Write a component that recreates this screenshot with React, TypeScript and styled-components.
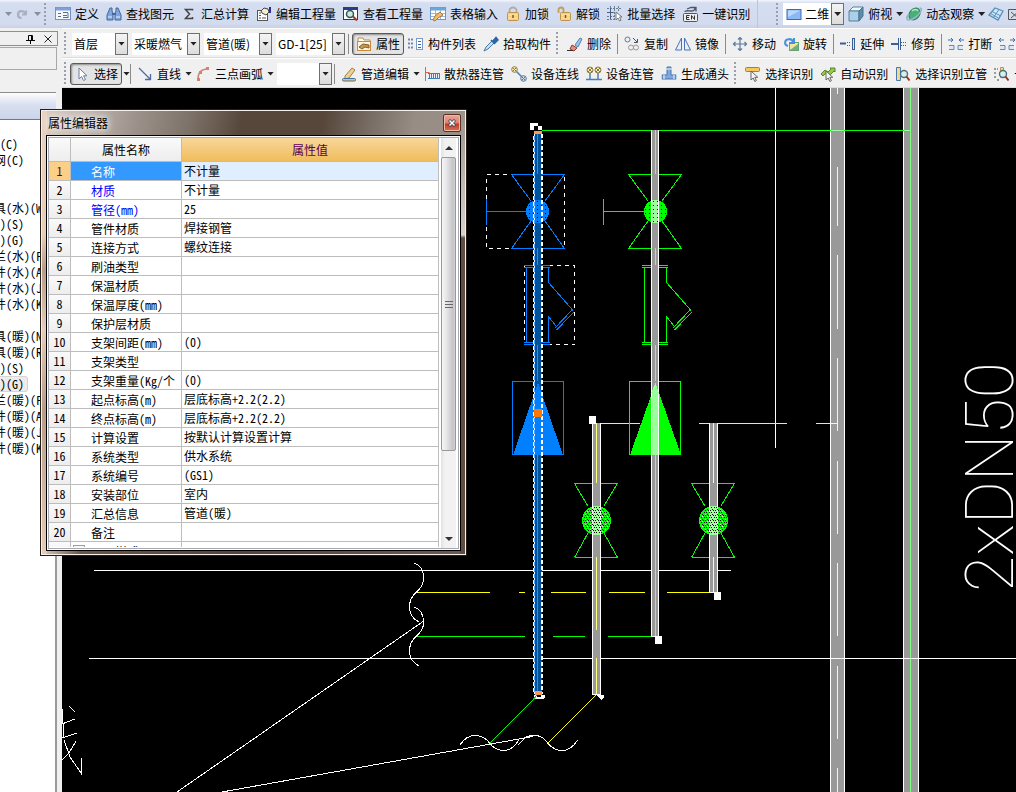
import React from "react";
import styled, { createGlobalStyle, css } from "styled-components";

const Global = createGlobalStyle`
  *, *::before, *::after { box-sizing: border-box; }
  body {
    margin: 0;
    background: #f0f0f0;
    color: #000;
    font-family: "Noto Sans CJK SC", "Liberation Sans", sans-serif;
    font-size: 12px;
    line-height: 16px;
  }
  button, select { font: inherit; color: inherit; }
`;

/* ---------- page frame ---------- */

const Page = styled.div`
  position: relative;
  display: flex;
  flex-direction: column;
  height: 100vh;
  overflow: hidden;
`;

const Work = styled.div`
  display: flex;
  flex: 1;
  min-height: 0;
`;

const Main = styled.main`
  display: flex;
  flex: 1;
  flex-direction: column;
  min-width: 0;
`;

/* ---------- toolbars ---------- */

const TopBar = styled.header`
  display: flex;
  align-items: center;
  height: 28px;
  overflow: hidden;
  white-space: nowrap;
  background: linear-gradient(#f4f7fd, #d5ddf0 3px, #d3dbee 24px, #c9d1e4);
`;

const BarRow = styled.div`
  display: flex;
  align-items: center;
  flex: none;
  height: 30px;
  padding: 2px 0 0 2px;
  overflow: hidden;
  white-space: nowrap;
  background: #f0f0f0;
  border-bottom: 1px solid #dcdcdc;
  box-shadow: inset 0 1px #fff;
`;

const Group = styled.div<{ $left?: number; $end?: number; $gap?: number }>`
  display: flex;
  flex: none;
  align-items: center;
  height: 100%;
  gap: ${(p) => p.$gap ?? 7}px;
  padding-left: ${(p) => p.$left ?? 0}px;
  padding-right: ${(p) => p.$end ?? 0}px;
`;

const Grip = styled.span`
  flex: none;
  width: 3px;
  height: 23px;
  background: radial-gradient(circle at 1px 1px, #9a9fab 1px, transparent 1px) 0 0 / 3px 4px;
`;

const Separator = styled.span`
  flex: none;
  width: 1px;
  height: 20px;
  margin: 0 -1px;
  background: #8a8a8a;
`;

const Tool = styled.button<{ $pressed?: boolean }>`
  display: flex;
  flex: none;
  align-items: center;
  gap: 4px;
  padding: 0;
  border: 0;
  background: none;
  white-space: nowrap;
  ${(p) =>
    p.$pressed &&
    css`
      height: 22px;
      padding: 0 3px;
      border: 1px solid #5a5a5a;
      border-radius: 3px;
      background: #e4e4e4;
      box-shadow: inset 1px 1px 2px #8c8c8c;
    `}
`;

const Caret = styled.span<{ $faded?: boolean }>`
  width: 7px;
  height: 4px;
  background: ${(p) => (p.$faded ? "#8a8f9c" : "#222")};
  clip-path: polygon(0 0, 100% 0, 50% 100%);
`;

const Combo = styled.span<{ $width: number }>`
  display: grid;
  flex: none;
  grid-template-columns: 1fr 13px;
  width: ${(p) => p.$width}px;
  height: 22px;
  background: #fff;
`;

const ComboSelect = styled.select`
  grid-area: 1 / 1 / 2 / 3;
  min-width: 0;
  padding: 0 13px 0 2px;
  border: 0;
  border-radius: 0;
  background: #fff;
  appearance: none;
`;

const ComboArrow = styled.span`
  display: flex;
  grid-area: 1 / 2 / 2 / 3;
  align-items: center;
  justify-content: center;
  z-index: 1;
  border: 1px solid #707070;
  background: linear-gradient(#f4f4f4, #dcdcdc);
  pointer-events: none;
`;

const ViewCombo = styled.span`
  display: flex;
  align-items: center;
  gap: 1px;
  height: 22px;
  padding-left: 3px;
  background: #fff;
`;

const BarEnd = styled.span`
  width: 17px;
  height: 100%;
  border-left: 1px solid #bcc5dc;
  border-radius: 0 4px 4px 0;
`;

/* ---------- left panel ---------- */

const Side = styled.aside`
  display: flex;
  flex: none;
  flex-direction: column;
  width: 62px;
  padding: 3px 4px 0 0;
  overflow: hidden;
`;

const SideHead = styled.div`
  display: flex;
  flex: none;
  align-items: center;
  justify-content: flex-end;
  gap: 9px;
  height: 15px;
  padding-right: 5px;
  border: 1px solid #8e8e8e;
  border-left: 0;
`;

const IconButton = styled.button`
  display: flex;
  padding: 0;
  border: 0;
  background: none;
`;

const SideBox = styled.div`
  flex: none;
  height: 23px;
  margin: 1px 1px 0 0;
  border: 1px solid #a8a8a8;
  border-left: 0;
`;

const SideBand = styled.div`
  flex: none;
  height: 28px;
  margin: 22px 2px 0 0;
  border-top: 1px solid #8e8e8e;
  border-bottom: 1px solid #777;
  background: linear-gradient(#fdfdff, #d8dff0 12px, #ccd4ea);
`;

const Tree = styled.ul`
  flex: 1;
  margin: 0 1px 0 0;
  padding: 16px 0 0;
  overflow: hidden;
  list-style: none;
  white-space: nowrap;
  background: #fff;
  border-right: 2px solid #9a9a9a;
  font-feature-settings: "hwid";
`;

const TreeItem = styled.li<{ $active?: boolean }>`
  display: flex;
  height: 16px;
  align-items: center;
  ${(p) =>
    p.$active &&
    css`
      width: 28px;
      background: #ececec;
      border: 1px solid #d6d6d6;
      border-left: 0;
      border-radius: 0 3px 3px 0;
    `}
`;

const TreeText = styled.span`
  margin-left: -6px;
  white-space: pre;
`;

/* ---------- drawing area ---------- */

const Canvas = styled.section`
  flex: 1;
  min-height: 0;
  overflow: hidden;
  background: #000;
  svg { display: block; width: 100%; height: 100%; }
`;

const PipeLabel = styled.text`
  fill: #fff;
  font-family: Roboto, "Liberation Sans", sans-serif;
  font-size: 66px;
  font-weight: 100;
`;

/* ---------- property window ---------- */

const Dialog = styled.section`
  position: absolute;
  left: 40px;
  top: 109px;
  width: 427px;
  padding: 0 4px 4px;
  border: 1px solid #241c18;
  box-shadow: inset 0 0 0 1px #f6f0ec;
  background:
    linear-gradient(#9a9189, #d8d2cc 125px, #5e4e42 128px, #5e4e42) right / 6px 100% no-repeat,
    linear-gradient(#e6d3c3, #e6cdb8 125px, #b79c88 160px, #e6cdb8 220px, #b79c88 300px, #e6cdb8) left / 6px 100% no-repeat,
    linear-gradient(90deg, #e0c9b6, #6b5547 40px, #54443a 200px, #6b5b50) bottom / 100% 6px no-repeat,
    linear-gradient(100deg, #dccdc2, #c4bab3 40px, #9c928b 95px, #7c7167 150px, #57473b 200px, #57473b 280px, #7b7067 330px, #978d85 370px, #9a9189);
`;

const TitleBar = styled.header`
  display: flex;
  align-items: center;
  justify-content: space-between;
  height: 27px;
  padding: 0 1px 1px 3px;
`;

const Title = styled.h1`
  margin: 0;
  font-size: 12px;
  font-weight: 400;
  text-shadow: 0 0 6px #fff, 0 0 10px #fff;
`;

const CloseButton = styled.button`
  display: flex;
  align-items: center;
  justify-content: center;
  width: 18px;
  height: 18px;
  padding: 0;
  border: 1px solid #5c3228;
  border-radius: 2px;
  background: linear-gradient(#eba595, #dd8070 8px, #bd3a20 9px, #dd7050);
  box-shadow: inset 0 0 0 1px #f0b8aa;
`;

const DialogBody = styled.div`
  display: flex;
  height: 412px;
  margin: 0 3px 2px;
  border: 1px solid #a8a8b0;
  background: #fff;
  box-shadow: 0 0 0 1px #fff, 0 0 0 2px #000;
`;

const TableClip = styled.div`
  flex: 1;
  overflow: hidden;
  border-bottom: 1px solid #fff;
`;

const PropTable = styled.table`
  width: 100%;
  table-layout: fixed;
  border-spacing: 0;
  font-feature-settings: "hwid";
  line-height: 18px;
`;

const HeadCell = styled.th<{ $hot?: boolean }>`
  height: 24px;
  padding: 0;
  border-right: 1px solid #bdbdbd;
  border-bottom: 1px solid #bdbdbd;
  font-weight: 400;
  color: ${(p) => (p.$hot ? "#5a005a" : "#000")};
  background: ${(p) => (p.$hot ? "linear-gradient(#f8d69a, #f0bd5c)" : "linear-gradient(#fafafa, #ededed)")};
`;

const cell = css`
  height: 19px;
  overflow: hidden;
  padding: 0;
  border-right: 1px solid #bdbdbd;
  border-bottom: 1px solid #bdbdbd;
  font-weight: 400;
  text-align: left;
  white-space: nowrap;
`;

const NumCell = styled.th<{ $on?: boolean }>`
  ${cell}
  text-align: center;
  color: ${(p) => (p.$on ? "#5a005a" : "#000")};
  background: ${(p) => (p.$on ? "#fbcf85" : "linear-gradient(#fafafa, #ededed)")};
`;

const NameCell = styled.td<{ $on?: boolean; $blue?: boolean; $tree?: boolean }>`
  ${cell}
  padding-top: 2px;
  padding-left: ${(p) => (p.$tree ? 2 : 20)}px;
  line-height: 16px;
  color: ${(p) => (p.$on ? "#fff" : p.$blue ? "#0000ff" : "#000")};
  background: ${(p) => (p.$on ? "#3399ff" : "#fff")};
`;

const ValueCell = styled.td<{ $on?: boolean }>`
  ${cell}
  padding-left: 2px;
  background: ${(p) => (p.$on ? "#e0efff" : "#fff")};
`;

const TreeRow = styled.span`
  display: flex;
  gap: 6px;
`;

const Expander = styled.button`
  width: 12px;
  height: 12px;
  margin-top: 1px;
  padding: 0;
  border: 1px solid #a0a0a0;
  background: #f4f4f4;
  line-height: 8px;
`;

const ScrollBar = styled.div`
  display: flex;
  flex-direction: column;
  width: 15px;
  margin: 0 2px;
  background: linear-gradient(90deg, #e2e2e2, #f2f2f2 4px, #f2f2f2);
`;

const ScrollButton = styled.button`
  display: flex;
  align-items: center;
  justify-content: center;
  height: 19px;
  padding: 0;
  border: 0;
  background: none;
`;

const ScrollTrack = styled.div`
  flex: 1;
`;

const Thumb = styled.div`
  display: flex;
  align-items: center;
  justify-content: center;
  height: 79%;
  border: 1px solid #989898;
  border-radius: 2px;
  background: linear-gradient(90deg, #f6f6f6, #e4e4e6 5px, #c4c4c8 11px, #d4d4d8);
`;

/* ---------- icons ---------- */

const B = "#3a5f94";
const P = { fill: "none", strokeWidth: 1 } as const;

const lens = (
  <>
    <circle cx="9" cy="8" r="3.5" fill="#d8f0e8" stroke="#4a7080" strokeWidth="1.4" />
    <path d="M11.5 10.5l3 4" stroke="#a03020" strokeWidth="2" />
  </>
);
const cursor = <path d="M6 5v9l2.2-2 1.6 3.5 1.6-.8-1.6-3.4h3z" fill="#f6f6f6" stroke="#666" />;

const ICONS: Record<string, React.ReactNode> = {
  redo: <path d="M12 9V4.500M12.500 8.500H8M12 8C10 4 4 4 4 8.500c0 2 1.500 3.500 3.500 3.500" {...P} stroke="#a9b0c0" strokeWidth="2.2" />,
  define: (<><rect x=".5" y="1.500" width="15" height="12" fill="#f4f8ff" stroke="#6f92c8" /><path d="M1 3h14" stroke="#7ea0d4" strokeWidth="3" /><path d="M3 7.500h3M3 10.500h3M8 6.500h5M8 11.500h5M13 7v5M8 9.500h4" stroke="#5c7080" /></>),
  find: (<><path d="M4 2h2v3l1 2v7H1V9zM12 2h-2v3l-1 2v7h6V9z" fill="#7fa6dc" stroke="#44689c" /><path d="M6 8h4" stroke="#44689c" strokeWidth="2" /><path d="M2 11h4M10 11h4" stroke="#e8f2ff" /></>),
  sum: <path d="M11.500 4.500V3.500H4.500l4 4.500-4 4.500h7v-1.500" {...P} stroke="#444" strokeWidth="1.500" />,
  editqty: (<><rect x="1.500" y="4.500" width="10" height="10" fill="#fff" stroke="#555" /><path d="M3 7h2M3 9.500h2M3 12h2M6 12h4" stroke="#555" /><path d="M5 5l3-3 4 1 1 3-3 3-4-2z" fill="#f8ecd0" stroke="#444" /><path d="M13 1h2v6h-2z" fill="#2c2c9c" /></>),
  viewqty: (<><rect x=".5" y="1.500" width="14" height="12" fill="#fff" stroke="#26367c" /><path d="M0 2.500h15" stroke="#2c3c8c" strokeWidth="3" /><circle cx="7" cy="8" r="3.500" fill="#c8e8e0" stroke="#355" strokeWidth="1.500" /><path d="M10 10.500l4 4" stroke="#a03828" strokeWidth="2" /></>),
  table: (<><rect x=".5" y="1.500" width="15" height="12" fill="#fff" stroke="#6a98cc" /><path d="M1 3h14" stroke="#68a8dc" strokeWidth="3" /><path d="M1 7.500h14M1 10.500h14M5.500 4v9M10.500 4v9" stroke="#9ab8d8" /><path d="M3 14l2-4 5-4 3 3-5 3-3 3z" fill="#f2bc70" stroke="#a87838" /></>),
  lock: (<><path d="M4.500 7V4.500a3.500 3 0 017 0V7" {...P} stroke="#b0aca0" strokeWidth="1.800" /><rect x="2.500" y="6.500" width="11" height="8" rx="1" fill="#f6d084" stroke="#c09448" /><path d="M3 9h10M3 12h10" stroke="#fbe4b0" /><path d="M8 9v3" stroke="#805818" strokeWidth="1.500" /></>),
  unlock: (<><path d="M2.500 7V4a2.500 2.500 0 015 0v3" {...P} stroke="#c0a060" strokeWidth="1.800" /><rect x="4.500" y="6.500" width="10" height="8" rx="1" fill="#f6d084" stroke="#c09448" /><path d="M5 9h9M5 12h9" stroke="#fbe4b0" /><path d="M9.500 9v3" stroke="#805818" strokeWidth="1.500" /></>),
  batch: (<><path d="M0 2.500h15M0 6.500h9M0 10.500h7M0 13.500h7M3.500 0v15M7.500 0v15M11.500 0v5" {...P} stroke="#6c7f98" strokeDasharray="2 1" /><path d="M0 6.500h6M3.500 2v11" stroke="#4c5f80" /><path d="M9 6v8l2-2 1.500 3 1.500-.8L12.600 11H15z" fill="#fff" stroke="#777" /></>),
  onekey: (<><rect x="1.500" y="7.500" width="14" height="8" rx="1" fill="#eee" stroke="#555" /><path d="M4.500 9.500v4M4.500 9.500h3M4.500 11.500h2.500M4.500 13.500h3M9.500 13.500v-4l3 4v-4" {...P} stroke="#333" /><path d="M3 6c0-2 4-1 6-1s4 0 4-3M5 3l4-1.500h5v4" {...P} stroke="#4c5468" strokeWidth="1.300" /></>),
  rect: (<><rect x="1" y="3.500" width="14" height="10" fill="#8cb8f4" stroke="#3a68c0" /><path d="M2 4.500h12L2 11z" fill="#b8d8fc" /></>),
  cube: (<><path d="M1 5l4-4h10l-4 4z" fill="#f0f8fc" stroke="#5a8098" /><path d="M1 5h10v10H1z" fill="#a8d0e8" stroke="#5a8098" /><path d="M11 5l4-4v9l-4 5z" fill="#5c8cac" stroke="#47708a" /></>),
  orbit: (<><ellipse cx="8.500" cy="8" rx="5" ry="6.500" transform="rotate(40 8.500 8)" fill="#48b070" stroke="#2a8058" /><path d="M6 5c2-2 5-2 6 0" {...P} stroke="#b8ecc8" strokeWidth="1.500" /><path d="M3 8c-3 3-3 6 0 6 4 0 10-5 12-9 1-2 0-3-1.500-3" {...P} stroke="#8fb4cc" strokeWidth="1.600" /></>),
  iso: (<><path d="M1 9l6-7 8 3-5 9z" fill="#d0e8f8" stroke="#5a90b8" strokeWidth="1.300" /><path d="M4 5.500l8 4M11 3.500L5.500 11.500M2.500 7.500l8 4.500" {...P} stroke="#5a90b8" /></>),
  close2: <path d="M1.500 3.500h12v10h-12zM4 6l7 6M11 6l-7 6" {...P} stroke="#555" />,
  cursor: <path d="M5 2v11l2.500-2.500 2 4 2-1-2-3.700H13z" fill="#fff" stroke="#6a80a8" />,
  props: (<><path d="M2 2h5l1 2h6v3H2z" fill="#fff" stroke="#c08848" /><rect x="1.500" y="5.500" width="13" height="9" fill="#fff4dc" stroke="#c88840" /><path d="M3 11l4-3 6 1v3l-4-1-3 2z" fill="#c89848" stroke="#806030" /></>),
  list: (<><path d="M0 3.500h6M0 7.500h6M0 11.500h6" {...P} stroke="#7088b0" strokeWidth="2" strokeDasharray="2 1" /><rect x="8.500" y="2.500" width="6" height="11" fill="#fff" stroke="#7c98c4" /><path d="M10 5.500h3M10 8.500h3M10 11.500h3" stroke="#3c68b0" /></>),
  dropper: (<><path d="M1 15l2-4 6-6 2 2-6 6z" fill="#c8e0f4" stroke="#4878a8" /><path d="M8 4l4 4M10 5l3-3.500L15 4l-3 3z" fill="#2f64a8" stroke="#2f64a8" strokeWidth="1.500" /></>),
  erase: (<><path d="M8 9l5-7 2 1-4 8z" fill="#9cc8f0" stroke="#5080b0" /><path d="M5 9l5 3-3 3-4-2z" fill="#e09080" stroke="#983828" /><path d="M0 14.500h6" stroke="#333" /></>),
  copy: (<><circle cx="3.500" cy="3.500" r="2.500" {...P} stroke="#5a78b0" /><circle cx="7" cy="11.500" r="2.500" {...P} stroke="#999" /><circle cx="12" cy="11.500" r="2.500" {...P} stroke="#999" /><path d="M9 2l4 4M13.500 3v3.500H10" {...P} stroke="#456" /></>),
  mirror: <path d="M6.500 2v12H.500zM9.500 2v12h6z" fill="#e6f0fc" stroke="#4a72b4" />,
  move: <path d="M8 1.500v13M1.500 8h13M6 3.500l2-2 2 2M6 12.500l2 2 2-2M3.500 6l-2 2 2 2M12.500 6l2 2-2 2" {...P} stroke="#5878a0" strokeWidth="1.200" />,
  rotate: (<><rect x="6.500" y="6.500" width="9" height="8" fill="#f4e4a0" stroke="#68a070" /><path d="M7 14l8-6v6z" fill="#70b088" /><path d="M10 6A4 3.500 0 105 10M11 2v5H6" {...P} stroke="#4a90d8" strokeWidth="2" /></>),
  extend: (<><path d="M0 7.500h6" stroke={B} strokeWidth="2" /><path d="M7 6.500h4M7 9.500h4" {...P} stroke={B} strokeDasharray="1 1" /><rect x="12.500" y="2.500" width="2" height="11" fill="#dce8f8" stroke={B} /></>),
  trim: (<><path d="M0 8h7" stroke={B} strokeWidth="2" /><path d="M10 6.500h5M10 9.500h5" {...P} stroke={B} strokeDasharray="1 1" /><path d="M7.500 2v12M9.500 2v12" stroke={B} /></>),
  break: (<><path d="M0 4h5M3 2l2 2-2 2M16 4h-5M13 2l-2 2 2 2" {...P} stroke="#3870b0" /><path d="M1 9.500h5v4H1M15 9.500h-5v4h5" fill="#dce8f8" stroke="#6a88b0" /></>),
  join: (<><path d="M5 4H0M2 2L0 4l2 2M11 4h5M14 2l2 2-2 2" {...P} stroke="#3870b0" /><path d="M1 9.500h5v4H1M15 9.500h-5v4h5" fill="#dce8f8" stroke="#6a88b0" /></>),
  line: <path d="M2 2l11 11M13.500 8v5.500H8" {...P} stroke="#4a6ca4" strokeWidth="1.300" />,
  arc: (<><path d="M3 13C3 7 6 3 13 3" {...P} stroke="#c88878" strokeWidth="1.500" /><path d="M2 12h3v3H2zM4 5h3v3H4zM11 1h3v3h-3z" fill="#d88068" /></>),
  pipeedit: (<><path d="M4 10l7-8 3 2-6 8-4 1z" fill="#f0d090" stroke="#a08040" /><rect x="1.500" y="12.500" width="13" height="2.500" rx="1" fill="#f0c060" stroke="#4070a0" /></>),
  radiator: (<><path d="M1.500 1v14M1.500 6.500h4" {...P} stroke="#e06040" /><path d="M4 7.500h12M5.500 7v6M7.500 7v6M9.500 7v6M11.500 7v6M13.500 7v6M15.500 7v6M4 12.500h12" {...P} stroke="#4080c0" /></>),
  devline: (<><path d="M5 5l6 6" stroke="#4a80b8" strokeWidth="1.500" /><circle cx="3.500" cy="3.500" r="2.800" fill="#fff0b0" stroke="#88783c" /><circle cx="12.500" cy="12.500" r="2.800" fill="#cfe0f0" stroke="#5a7088" /><path d="M2 2l3 3M5 2L2 5M11 11l3 3M14 11l-3 3" stroke="#88783c" /></>),
  devpipe: (<><path d="M4 7v6M12 7v6M0 13.500h16" {...P} stroke="#4a80b8" strokeWidth="1.500" /><circle cx="4" cy="4" r="3" fill="#fff0b0" stroke="#88783c" /><circle cx="12" cy="4" r="3" fill="#fff0b0" stroke="#88783c" /><path d="M2 2l4 4M6 2L2 6M10 2l4 4M14 2l-4 4" stroke="#88783c" /></>),
  tee: (<><path d="M6 1h4v8h5v4H1V9h5z" fill="#7fa8dc" stroke="#4a70a8" /><path d="M5 3h6M0 8v6M16 8v6M3 9v4M13 9v4" stroke="#c8dcf4" strokeWidth="1.500" /></>),
  selrec: (<><rect x=".5" y="1.500" width="14" height="4" rx="1" fill="#f4c860" stroke="#a88030" />{cursor}</>),
  autorec: (<><path d="M1 8l4-4 3 2 3-3-1-1h5v4l-1-1-5 5-3-3-3 3z" fill="#98c848" stroke="#5c8828" />{cursor}</>),
  riser: (<><path d="M1.500 1.500h4v13h-4z" fill="#f4d890" stroke="#4878a8" />{lens}</>),
  riser2: (<><path d="M0 3h4M0 7h3M0 11h3M3 14h3" stroke="#444" strokeDasharray="2 1" /><path d="M6.500 1.500h3v10h-3z" fill="#f4d890" stroke="#b89850" />{lens}</>),
};

const Svg = styled.svg`
  flex: none;
  width: 16px;
  height: 16px;
`;

const Icon = ({ name }: { name: string }) => (
  <Svg viewBox="0 0 16 16" aria-hidden="true">{ICONS[name]}</Svg>
);

type ToolProps = { icon: string; label?: string; pressed?: boolean; caret?: boolean };
const ToolButton = ({ icon, label, pressed, caret }: ToolProps) => (
  <Tool type="button" $pressed={pressed} aria-pressed={pressed} aria-label={label ?? icon}>
    <Icon name={icon} />
    {label}
    {caret && <Caret />}
  </Tool>
);

const Picker = ({ label, value, width }: { label: string; value: string; width: number }) => (
  <Combo $width={width}>
    <ComboSelect aria-label={label} defaultValue={value}>
      <option>{value}</option>
    </ComboSelect>
    <ComboArrow><Caret /></ComboArrow>
  </Combo>
);

/* ---------- data ---------- */

const TREE: string[] = [
  " (C)", "网(C)", "", "", "具(水)(W", " )(S)", " )(G)", "兰(水)(F", "件(水)(A", "件(水)(J", "件(水)(K",
  "", "具(暖)(N", "具(暖)(R", " )(S)", " )(G)", "兰(暖)(F", "件(暖)(A", "件(暖)(J", "件(暖)(K",
];
const ACTIVE_TREE_ROW = 15;

const ROWS: [string, string][] = [
  ["名称", "不计量"], ["材质", "不计量"], ["管径(mm)", "25"], ["管件材质", "焊接钢管"],
  ["连接方式", "螺纹连接"], ["刷油类型", ""], ["保温材质", ""], ["保温厚度(mm)", ""],
  ["保护层材质", ""], ["支架间距(mm)", "(0)"], ["支架类型", ""], ["支架重量(Kg/个", "(0)"],
  ["起点标高(m)", "层底标高+2.2(2.2)"], ["终点标高(m)", "层底标高+2.2(2.2)"],
  ["计算设置", "按默认计算设置计算"], ["系统类型", "供水系统"], ["系统编号", "(GS1)"],
  ["安装部位", "室内"], ["汇总信息", "管道(暖)"], ["备注", ""],
];

/* ---------- drawing ---------- */

const GREEN = "#00ff00";
const BLUE = "#0080ff";

type Span = [number, number];

const Pipe = ({ x, w, from, to, core, center, spans }: {
  x: number; w: number; from: number; to: number; core: string; center: number; spans: Span[];
}) => (
  <g>
    <rect x={x} y={from} width={w} height={to - from} fill="#fff" />
    <rect x={x + 1} y={from} width={w - 2} height={to - from - 1} fill="#999" />
    {spans.map(([a, b]) => (
      <rect key={a} x={center} y={a} width="1" height={b - a} fill={core} />
    ))}
  </g>
);

const GateValve = ({ x, color }: { x: number; color: string }) => (
  <g stroke={color} fill="none" transform={`translate(${x} 0)`}>
    <path d="M-27 174.500H27M-27 248.500H27M-26.500 174.500L-7 201M26.500 174.500L7 201M-26.500 248.500L-7 221M26.500 248.500L7 221M-51.500 199v26M-51.500 211.500H-11" />
  </g>
);

const Strainer = ({ x, color }: { x: number; color: string }) => (
  <path
    transform={`translate(${x} 0)`}
    stroke={color}
    fill="none"
    d="M0 265.500h26M0 267.500h26M0 342.500h26M0 344.500h26M2.500 267v76M24.500 267v15.500L49 310.500M24.500 343V316.500L32 326M48.500 309.500L30.500 328.500M50 312L32.500 330"
  />
);

const SmallValve = ({ x }: { x: number }) => (
  <path
    transform={`translate(${x} 0)`}
    stroke={GREEN}
    fill="none"
    d="M-21.500 483.500h43M-21.500 557.500h43M-21.500 483.500L-8 506M21.500 483.500L8 506M-21.500 557.500L-8 533M21.500 557.500L8 533"
  />
);

const Drawing = () => (
  <svg role="img" aria-label="管道平面图" shapeRendering="crispEdges">
    <defs>
      <pattern id="sparse" width="4" height="4" patternUnits="userSpaceOnUse">
        <rect width="1" height="1" x="1" y="1" fill="#000" />
      </pattern>
      <pattern id="hatch" width="5" height="5" patternUnits="userSpaceOnUse">
        <path d="M0 0h1v1H0zM3 0h1v1H3zM1 2h1v1H1zM4 2h1v1H4zM2 4h1v1H2z" fill="#000" />
        <path d="M2 1h1v1H2zM0 4h1v1H0z" fill="#cfffcf" />
      </pattern>
    </defs>
    <g transform="translate(-62 -88)">
      <path d="M775.500 88V448M94 570.500H731" stroke="#fff" />
      <path d="M601 423.500H640M699 423.500H787M816 423.500H837M416 592.500H490M519 592.500H525M551 592.500H586M609 592.500H645M667 592.500H710" stroke="#ffff00" />
      <path d="M416 636.500H525M553 636.500H585M608 636.500H652" stroke={GREEN} />

      <Pipe x={830} w={15} from={88} to={4000} core="#ffff99" center={837}
        spans={[[88, 94], [167, 226], [255, 329], [358, 431], [461, 534], [563, 636], [666, 739], [768, 841]]} />
      <Pipe x={903} w={16} from={88} to={4000} core="#80ff80" center={910} spans={[[88, 4000]]} />
      <path d="M542 130.500H910" stroke={GREEN} />
      <path d="M831 130.500H844M904 130.500H910" stroke="#99ff99" />
      <path d="M831 423.500H837" stroke="#ffff99" />
      <path d="M89 658.500H4000" stroke="#fff" />

      <GateValve x={655} color={GREEN} />
      <circle cx="655.500" cy="211.500" r="11.500" fill={GREEN} />
      <Strainer x={642} color={GREEN} />
      <rect x="629.500" y="381.500" width="51" height="73" fill="none" stroke={GREEN} />
      <path d="M655.500 383L681 455H630z" fill={GREEN} />
      <Pipe x={651} w={8} from={130} to={637} core="#80ff80" center={655}
        spans={[[130, 174], [248, 265], [345, 381], [455, 636]]} />
      <rect x="652" y="200" width="6" height="23" fill="#99ff99" />
      <path d="M655.500 383l3.500 10v62h-8v-62z" fill="#99ff99" />
      <path d="M651.500 393v62M658.500 393v62" stroke="#fff" />
      <circle cx="655.500" cy="211.500" r="10.500" fill="url(#sparse)" />

      <SmallValve x={596} />
      <SmallValve x={713} />
      <circle cx="596.500" cy="520.500" r="14.500" fill={GREEN} />
      <circle cx="713.500" cy="520.500" r="14.500" fill={GREEN} />
      <Pipe x={592} w={9} from={423} to={695} core="#ffff80" center={596}
        spans={[[423, 483], [557, 630], [658, 694]]} />
      <Pipe x={709} w={9} from={423} to={593} core="#ffff80" center={713}
        spans={[[423, 483], [557, 592]]} />
      <path d="M593 506h7v29h-7zM710 506h7v29h-7z" fill="#99ff99" />
      <circle cx="596.500" cy="520.500" r="13.500" fill="url(#hatch)" />
      <circle cx="713.500" cy="520.500" r="13.500" fill="url(#hatch)" />

      <rect x="486.500" y="174.500" width="78" height="74" fill="none" stroke="#fff" strokeDasharray="4 4" />
      <rect x="524.500" y="265.500" width="50" height="79" fill="none" stroke="#fff" strokeDasharray="4 4" />
      <GateValve x={538} color={BLUE} />
      <circle cx="537.500" cy="211.500" r="11.500" fill={BLUE} />
      <Strainer x={524} color={BLUE} />
      <rect x="512.500" y="381.500" width="51" height="73" fill="none" stroke={BLUE} />
      <path d="M538 383L563 455H513z" fill={BLUE} />
      <rect x="534" y="132" width="8" height="562" fill="#00529c" />
      <path d="M537.500 134v40M537.500 248v17M537.500 345v36M537.500 455v237" stroke="#00b49c" />
      <path d="M534 200h8v23h-8zM538 383l4 11v61h-8v-61z" fill={BLUE} />
      <circle cx="537.500" cy="211.500" r="10.500" fill="url(#sparse)" />
      <path d="M534.500 134V694" stroke="#4aa4ff" />
      <path d="M533.500 136V694" stroke="#fff" strokeDasharray="4 2" />
      <path d="M534.500 134V694" stroke="#fff" strokeDasharray="2 4" />
      <path d="M542 134V694" stroke="#fff" strokeWidth="2" strokeDasharray="4 2" />
      <path d="M534 131h8v3h-8zM535 691h7v4h-7z" fill="#ff9a4a" />
      <rect x="534" y="409" width="8" height="8" fill="#ff7800" />
      <path d="M530 123h8v3h-4v4h-4zM538 126h4v4h-4z" fill="#fff" />
      <path d="M534 695h3v2h4v-2h4v3l-2 1h-9z" fill="#fff" />

      <path d="M589 416h7v8h-7zM714 592h7v8h-7zM655 636h7v8h-7zM597 695h7v2l-3 3-4-4z" fill="#fff" />
      <path d="M536 697L490 743" stroke={GREEN} />
      <path d="M533 699l4-4" stroke="#ff00ff" />
      <path d="M596 695L548 743" stroke="#ffff00" />

      <g stroke="#fff" fill="none">
        <path d="M414 563C420 565 423.500 570 423.500 577C423.500 587 419 589 416 592.500C411 597 409.500 601 409.500 607C409.500 615 413 619 419 622" />
        <path d="M414 607C420 609 423.500 614 423.500 622C423.500 631 419 633 416 636.500C411 641 409.500 645 409.500 651C409.500 659 413 662 419 666" />
        <path d="M423 621.500L177 792M530 737L222 792M530 737L534 735.500" />
        <path d="M460 745C465 737 470 735.500 475 735.500C482 735.500 486 738 490 743.500C494 749 499 750.500 504 750.500C511 750.500 515 746 519 740M518 745L526 737" />
        <path d="M526 737C530 735.500 532 735.500 534 735.500C541 735.500 544 738 548 743.500C553 749 557 750.500 562 750.500C569 750.500 573 747 577.500 740" />
        <path d="M69 706l6 6M62.500 709v15M62 724l13-5M63.500 724v14M62 738l15-5M64 740L70 757L81 773M62 760l7-7 7-12M81.500 758v17" />
      </g>

      <PipeLabel x="0" y="0" transform="translate(1013 592) rotate(-90)">2xDN50</PipeLabel>
    </g>
  </svg>
);

/* ---------- page ---------- */

const PropertyWindow = () => (
  <Dialog role="dialog" aria-labelledby="prop-title">
    <TitleBar>
      <Title id="prop-title">属性编辑器</Title>
      <CloseButton type="button" aria-label="关闭">
        <svg width="8" height="8" viewBox="0 0 8 8">
          <path d="M1 1l6 6M7 1L1 7" stroke="#3c4458" strokeWidth="3" />
          <path d="M1.500 1.500l5 5M6.500 1.500l-5 5" stroke="#fff" strokeWidth="1.500" />
        </svg>
      </CloseButton>
    </TitleBar>
    <DialogBody>
      <TableClip>
        <PropTable>
          <colgroup>
            <col style={{ width: 22 }} />
            <col style={{ width: 111 }} />
            <col />
          </colgroup>
          <thead>
            <tr>
              <HeadCell />
              <HeadCell scope="col">属性名称</HeadCell>
              <HeadCell scope="col" $hot>属性值</HeadCell>
            </tr>
          </thead>
          <tbody>
            {ROWS.map(([name, value], i) => (
              <tr key={name}>
                <NumCell scope="row" $on={i === 0}>{i + 1}</NumCell>
                <NameCell $on={i === 0} $blue={i === 1 || i === 2}>{name}</NameCell>
                <ValueCell $on={i === 0}>{value}</ValueCell>
              </tr>
            ))}
            <tr>
              <NumCell scope="row">21</NumCell>
              <NameCell $tree>
                <TreeRow><Expander type="button" aria-label="展开">+</Expander>显示样式</TreeRow>
              </NameCell>
              <ValueCell />
            </tr>
          </tbody>
        </PropTable>
      </TableClip>
      <ScrollBar>
        <ScrollButton type="button" aria-label="向上">
          <svg width="8" height="4"><path d="M0 4l4-4 4 4z" fill="#333" /></svg>
        </ScrollButton>
        <ScrollTrack>
          <Thumb>
            <svg width="8" height="8"><path d="M0 1.500h8M0 4.500h8M0 7.500h8" stroke="#666" /></svg>
          </Thumb>
        </ScrollTrack>
        <ScrollButton type="button" aria-label="向下">
          <svg width="8" height="4"><path d="M0 0h8l-4 4z" fill="#333" /></svg>
        </ScrollButton>
      </ScrollBar>
    </DialogBody>
  </Dialog>
);

export default function App() {
  return (
    <Page>
      <Global />
      <TopBar>
        <Group $left={5} $end={3} $gap={2}>
          <Caret $faded />
          <Tool type="button" aria-label="重做"><Icon name="redo" /><Caret $faded /></Tool>
        </Group>
        <Grip />
        <Group $left={8} $end={2}>
          <ToolButton icon="define" label="定义" />
          <ToolButton icon="find" label="查找图元" />
          <ToolButton icon="sum" label="汇总计算" />
          <ToolButton icon="editqty" label="编辑工程量" />
          <ToolButton icon="viewqty" label="查看工程量" />
          <ToolButton icon="table" label="表格输入" />
          <ToolButton icon="lock" label="加锁" />
          <ToolButton icon="unlock" label="解锁" />
          <ToolButton icon="batch" label="批量选择" />
          <ToolButton icon="onekey" label="一键识别" />
          <BarEnd />
        </Group>
        <Grip />
        <Group $left={4}>
          <ViewCombo>
            <Icon name="rect" />
            <Picker label="视图" value="二维" width={41} />
          </ViewCombo>
        </Group>
        <Group $left={4} $gap={3}>
          <ToolButton icon="cube" label="俯视" caret />
          <ToolButton icon="orbit" label="动态观察" caret />
          <ToolButton icon="iso" />
          <ToolButton icon="close2" />
        </Group>
      </TopBar>
      <Work>
        <Side>
          <SideHead>
            <IconButton type="button" aria-label="固定">
              <svg width="9" height="10"><path d="M2.500 6V1.500h4V6M5.500 1v5M0 6.500h9M4.500 7v3" fill="none" stroke="#000" /></svg>
            </IconButton>
            <IconButton type="button" aria-label="关闭面板">
              <svg width="8" height="8"><path d="M.5.5l7 7M7.500.5l-7 7" stroke="#222" /></svg>
            </IconButton>
          </SideHead>
          <SideBox />
          <SideBand />
          <Tree>
            {TREE.map((text, i) => (
              <TreeItem key={i} $active={i === ACTIVE_TREE_ROW}>
                <TreeText>{text}</TreeText>
              </TreeItem>
            ))}
          </Tree>
        </Side>
        <Main>
          <BarRow>
            <Grip />
            <Group $left={5} $end={5}>
              <Group $gap={4}>
                <Picker label="楼层" value="首层" width={56} />
                <Picker label="专业" value="采暖燃气" width={68} />
                <Picker label="构件类型" value="管道(暖)" width={68} />
                <Picker label="构件" value="GD-1[25]" width={69} />
                <Separator />
                <ToolButton icon="props" label="属性" pressed />
                <ToolButton icon="list" label="构件列表" />
              </Group>
              <ToolButton icon="dropper" label="拾取构件" />
            </Group>
            <Grip />
            <Group $left={8}>
              <ToolButton icon="erase" label="删除" />
              <Separator />
              <ToolButton icon="copy" label="复制" />
              <ToolButton icon="mirror" label="镜像" />
              <Separator />
              <ToolButton icon="move" label="移动" />
              <ToolButton icon="rotate" label="旋转" />
              <Separator />
              <ToolButton icon="extend" label="延伸" />
              <ToolButton icon="trim" label="修剪" />
              <Separator />
              <ToolButton icon="break" label="打断" />
              <ToolButton icon="join" />
            </Group>
          </BarRow>
          <BarRow>
            <Grip />
            <Group $left={3} $end={5}>
              <Group $gap={1}>
                <ToolButton icon="cursor" label="选择" pressed />
                <Caret />
                <Separator />
              </Group>
              <Group $gap={3}>
                <ToolButton icon="line" label="直线" caret />
                <ToolButton icon="arc" label="三点画弧" caret />
                <Picker label="画弧参数" value="" width={55} />
                <Separator />
              </Group>
              <Group $gap={4}>
                <ToolButton icon="pipeedit" label="管道编辑" caret />
                <ToolButton icon="radiator" label="散热器连管" />
              </Group>
              <ToolButton icon="devline" label="设备连线" />
              <ToolButton icon="devpipe" label="设备连管" />
              <ToolButton icon="tee" label="生成通头" />
            </Group>
            <Grip />
            <Group $left={8}>
              <ToolButton icon="selrec" label="选择识别" />
              <ToolButton icon="autorec" label="自动识别" />
              <ToolButton icon="riser" label="选择识别立管" />
              <ToolButton icon="riser2" label="一" />
            </Group>
          </BarRow>
          <Canvas>
            <Drawing />
          </Canvas>
        </Main>
      </Work>
      <PropertyWindow />
    </Page>
  );
}
